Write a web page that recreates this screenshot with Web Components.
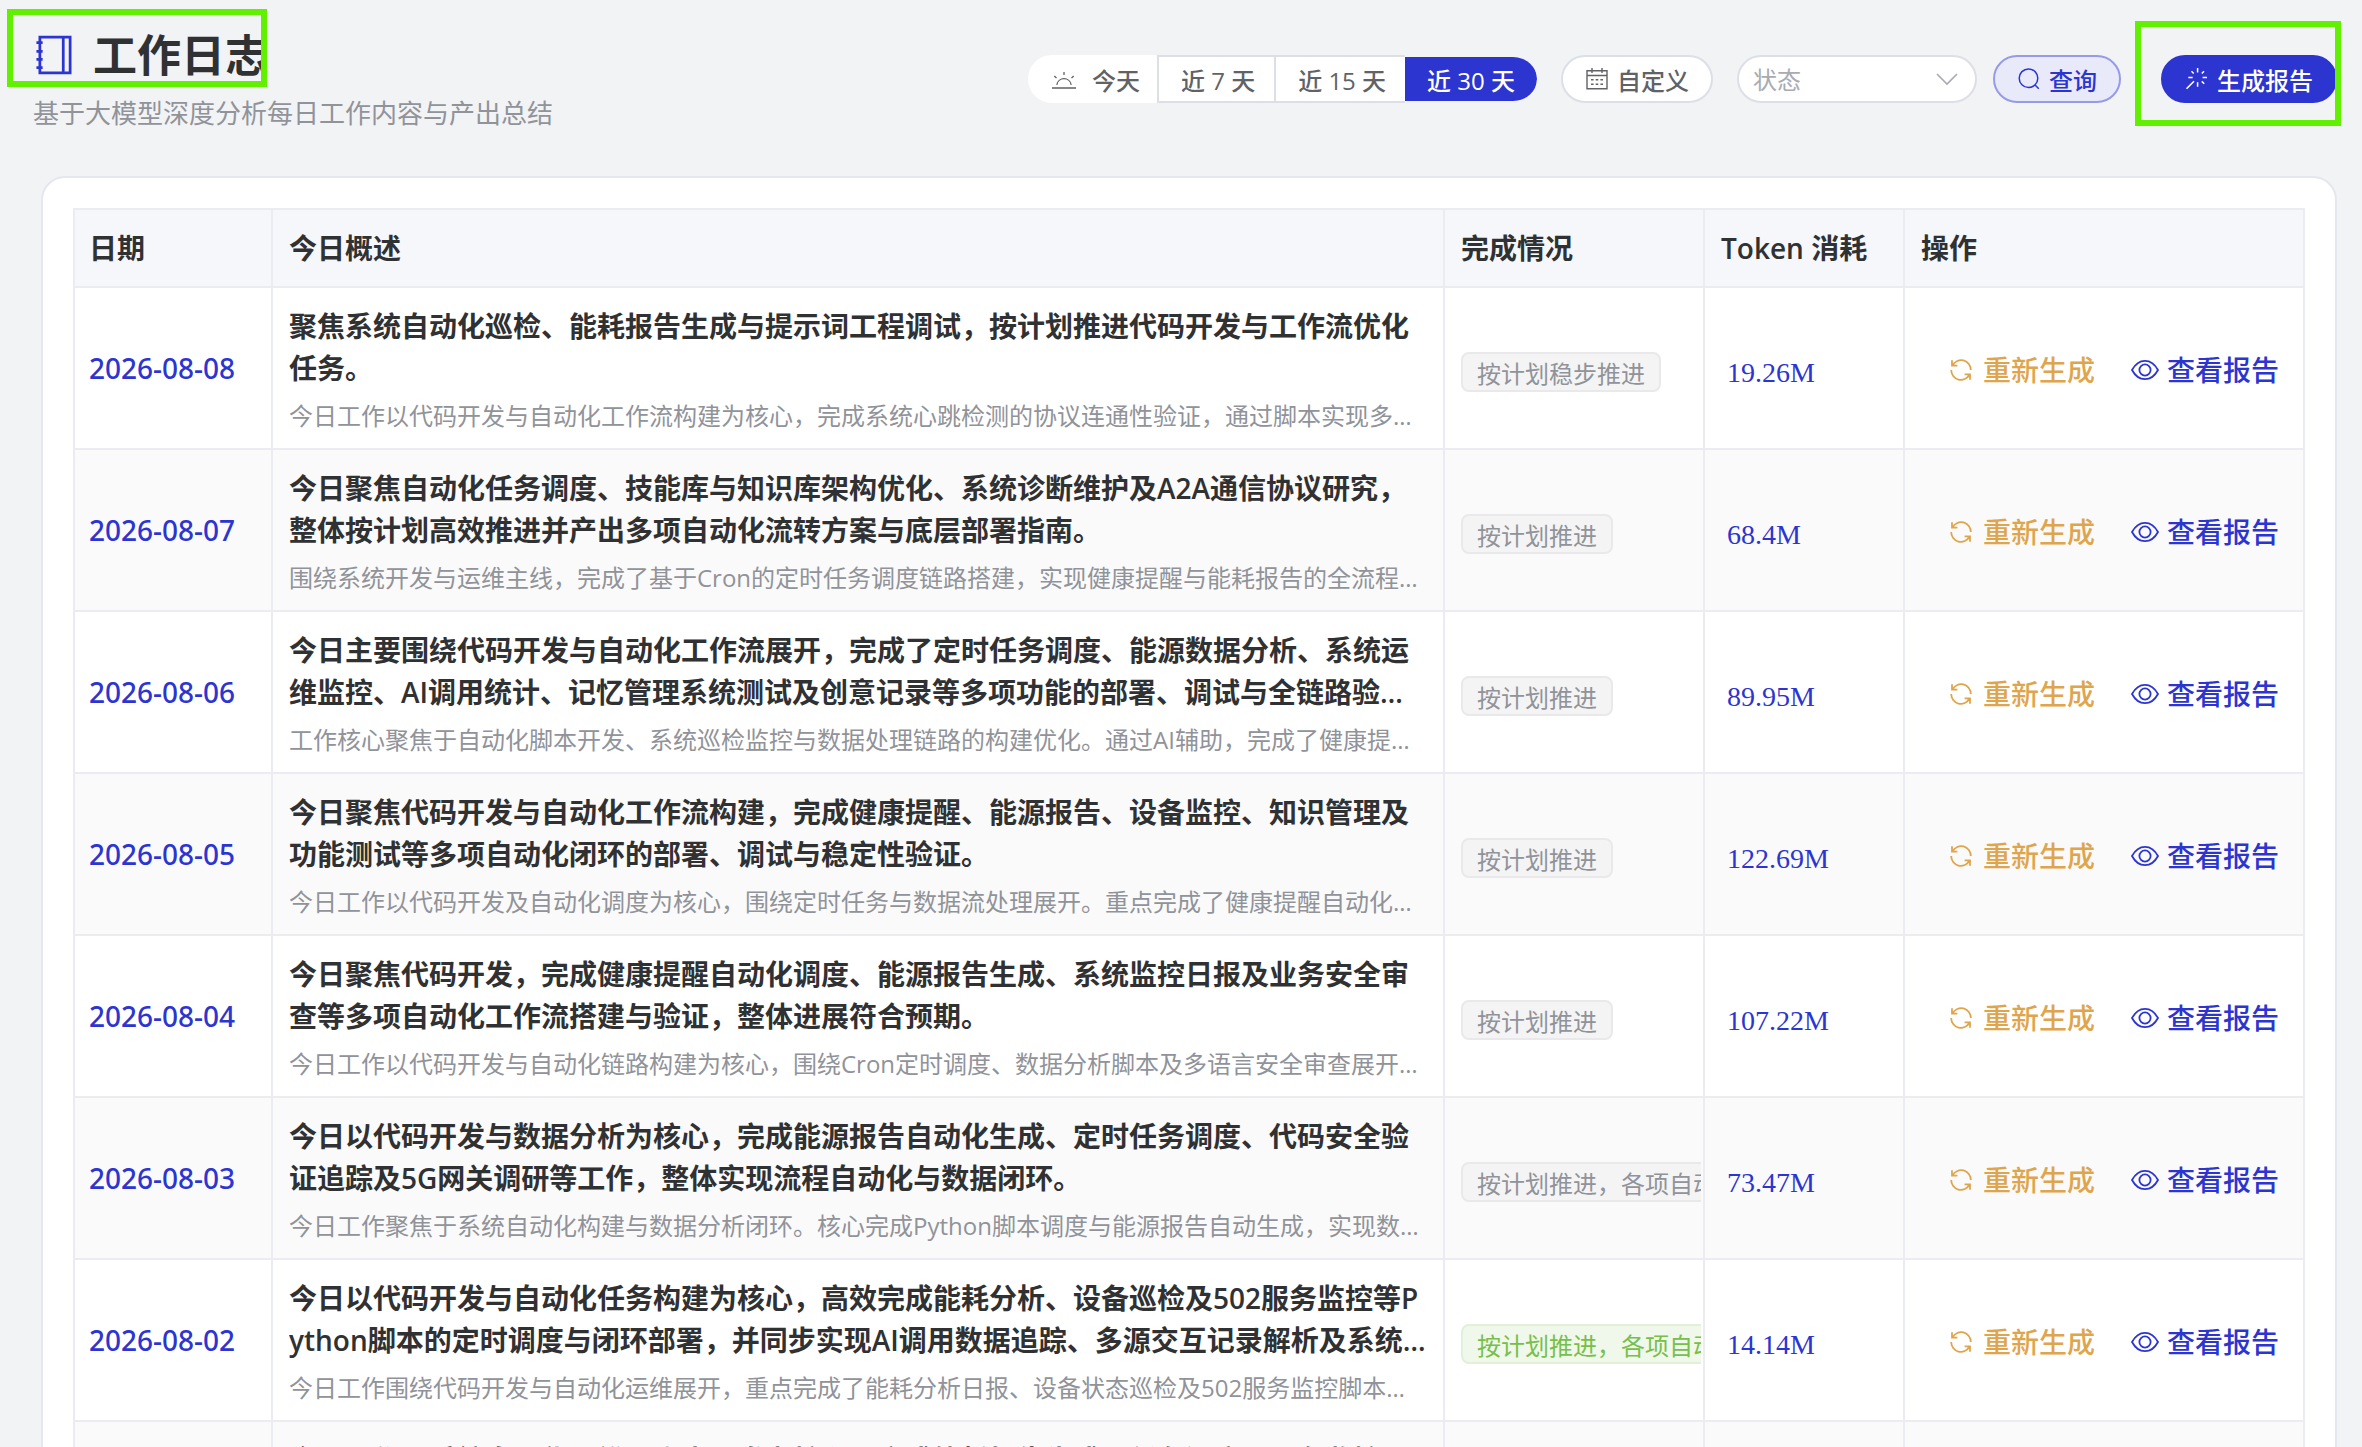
<!DOCTYPE html>
<html lang="zh-CN">
<head>
<meta charset="UTF-8">
<title>工作日志</title>
<style>
    body {
        margin: 0;
        background: #f2f3f5;
        color: #303133;
        font-family: "Open Sans", "Noto Sans CJK SC", sans-serif;
        --primary: #2c35d0;
        --line: #ebecf2;
        --mark: #61f000;
    }
</style>
</head>
<body>
<work-log-page></work-log-page>

<script>
const ICONS = {
    notebook: ['0 0 1024 1024', 64, '<path d="M160 96h704v832H160zM704 96v832M80 226h144M80 428h144M80 614h144M80 808h144"/>'],
    sunrise: ['0 0 24 24', 1.3, '<path d="M0 21h24M4.8 17.8a7.3 7.3 0 0 1 14.4 0M12 5v3M2.3 9l2.2 2M21.7 9l-2.2 2"/>'],
    calendar: ['0 0 24 24', 1.4, '<path d="M2 3.7h20v18.1H2zM2 8.5h20M7 1v5M17 1v5M6 12.8h2.6M10.7 12.8h2.6M15.4 12.8H18M6 17.3h2.6M10.7 17.3h2.6M15.4 17.3H18"/>'],
    search: ['0 0 24 24', 1.5, '<circle cx="11.5" cy="11.2" r="9.3"/><path d="M18 18l3.8 3.8"/>'],
    wand: ['0 0 24 24', 1.5, '<path d="M12.6 1v4.5M12.6 15.2v4.5M3.3 10.4h4.4M17.6 10.4H22M6.5 4.3l2.2 2.2M19 4.3l-2.2 2.2M16.8 14.4l2.4 2.4M1.5 21.8L9 14.2"/>'],
    arrow: ['0 0 24 24', 1.6, '<path d="M2 7l10 10L22 7"/>'],
    refresh: ['0 0 28 28', 1.8, '<path d="M5 4.2v5.4h5.4M5.6 9.2A9.7 9.7 0 0 1 23.8 14M23 23.8v-5.4h-5.4M22.4 18.8A9.7 9.7 0 0 1 4.2 14"/>'],
    eye: ['0 0 28 28', 1.8, '<path d="M1 14C4.5 7.5 9 4.8 14 4.8S23.5 7.5 27 14c-3.5 6.5-8 9.2-13 9.2S4.5 20.5 1 14z"/><circle cx="14" cy="14" r="5.6"/>']
};

const LOGS = [
    ['2026-08-08', '聚焦系统自动化巡检、能耗报告生成与提示词工程调试，按计划推进代码开发与工作流优化任务。', '今日工作以代码开发与自动化工作流构建为核心，完成系统心跳检测的协议连通性验证，通过脚本实现多…', '按计划稳步推进', 'info', '19.26M'],
    ['2026-08-07', '今日聚焦自动化任务调度、技能库与知识库架构优化、系统诊断维护及A2A通信协议研究，整体按计划高效推进并产出多项自动化流转方案与底层部署指南。', '围绕系统开发与运维主线，完成了基于Cron的定时任务调度链路搭建，实现健康提醒与能耗报告的全流程…', '按计划推进', 'info', '68.4M'],
    ['2026-08-06', '今日主要围绕代码开发与自动化工作流展开，完成了定时任务调度、能源数据分析、系统运维监控、AI调用统计、记忆管理系统测试及创意记录等多项功能的部署、调试与全链路验…', '工作核心聚焦于自动化脚本开发、系统巡检监控与数据处理链路的构建优化。通过AI辅助，完成了健康提…', '按计划推进', 'info', '89.95M'],
    ['2026-08-05', '今日聚焦代码开发与自动化工作流构建，完成健康提醒、能源报告、设备监控、知识管理及功能测试等多项自动化闭环的部署、调试与稳定性验证。', '今日工作以代码开发及自动化调度为核心，围绕定时任务与数据流处理展开。重点完成了健康提醒自动化…', '按计划推进', 'info', '122.69M'],
    ['2026-08-04', '今日聚焦代码开发，完成健康提醒自动化调度、能源报告生成、系统监控日报及业务安全审查等多项自动化工作流搭建与验证，整体进展符合预期。', '今日工作以代码开发与自动化链路构建为核心，围绕Cron定时调度、数据分析脚本及多语言安全审查展开…', '按计划推进', 'info', '107.22M'],
    ['2026-08-03', '今日以代码开发与数据分析为核心，完成能源报告自动化生成、定时任务调度、代码安全验证追踪及5G网关调研等工作，整体实现流程自动化与数据闭环。', '今日工作聚焦于系统自动化构建与数据分析闭环。核心完成Python脚本调度与能源报告自动生成，实现数…', '按计划推进，各项自动', 'info', '73.47M'],
    ['2026-08-02', '今日以代码开发与自动化任务构建为核心，高效完成能耗分析、设备巡检及502服务监控等Python脚本的定时调度与闭环部署，并同步实现AI调用数据追踪、多源交互记录解析及系统…', '今日工作围绕代码开发与自动化运维展开，重点完成了能耗分析日报、设备状态巡检及502服务监控脚本…', '按计划推进，各项自动', 'success', '14.14M'],
    ['2026-08-01', '今日工作以系统自动化运维与脚本开发为核心，完成能耗报告生成、任务调度与服务监控。', '今日工作以自动化任务为核心，完成日常巡检与报告生成。', '按计划推进', 'info', '56.31M']
];

class LineIcon extends HTMLElement {

    constructor(){
        super();
        this.shadowObj = this.attachShadow({mode:'open'});
    }

    connectedCallback(){
        const [viewBox, stroke, shape] = ICONS[this.getAttribute('name')];
        this.shadowObj.innerHTML = `
            <style>
                :host { display: inline-block; flex: none; width: 24px; height: 24px; }
                svg { display: block; width: 100%; height: 100%; }
            </style>
            <svg viewBox="${viewBox}" fill="none" stroke="currentColor" stroke-width="${stroke}" aria-hidden="true">${shape}</svg>
        `;
    }
}

class PillButton extends HTMLElement {

    constructor(){
        super();
        this.shadowObj = this.attachShadow({mode:'open'});
    }

    connectedCallback(){
        this.shadowObj.innerHTML = `
            <style>
                :host { display: block; }
                button {
                    display: flex;
                    align-items: center;
                    gap: 8px;
                    box-sizing: border-box;
                    height: 48px;
                    padding: 0 22px;
                    border: 2px solid #dcdfe6;
                    border-radius: 24px;
                    background: #fff;
                    color: #606266;
                    font: inherit;
                    font-size: 24px;
                    font-weight: 500;
                    white-space: nowrap;
                    cursor: pointer;
                }
                :host([type=plain]) button { background: #e8e9f9; border-color: #969ae8; color: var(--primary); }
                :host([type=primary]) button { background: var(--primary); border-color: var(--primary); color: #fff; }
            </style>
            <button type="button"><line-icon name="${this.getAttribute('icon')}"></line-icon><slot></slot></button>
        `;
    }
}

class RangePicker extends HTMLElement {

    constructor(){
        super();
        this.shadowObj = this.attachShadow({mode:'open'});
    }

    connectedCallback(){
        this.shadowObj.innerHTML = `
            <style>
                :host { display: block; }
                .group { display: flex; font-size: 24px; font-weight: 500; color: #606266; }
                label {
                    display: flex;
                    align-items: center;
                    box-sizing: border-box;
                    position: relative;
                    height: 48px;
                    padding: 0 19px 0 22px;
                    border: 2px solid #dcdfe6;
                    border-right: 0;
                    background: #fff;
                    white-space: nowrap;
                    cursor: pointer;
                }
                label:first-child { gap: 16px; padding-right: 17px; border-color: #fff; border-radius: 24px 0 0 24px; }
                label:last-child {
                    padding: 0 22px;
                    border-color: transparent;
                    border-left: 0;
                    border-radius: 0 24px 24px 0;
                    background-clip: padding-box;
                }
                label:has(:checked) { background-color: var(--primary); color: #fff; }
                input { position: absolute; opacity: 0; margin: 0; }
            </style>
            <div class="group" role="radiogroup" aria-label="日期范围">
                <label><input type="radio" name="range" value="1"><line-icon name="sunrise"></line-icon>今天</label>
                <label><input type="radio" name="range" value="7">近 7 天</label>
                <label><input type="radio" name="range" value="15">近 15 天</label>
                <label><input type="radio" name="range" value="30" checked>近 30 天</label>
            </div>
        `;
    }
}

class StatusSelect extends HTMLElement {

    constructor(){
        super();
        this.shadowObj = this.attachShadow({mode:'open'});
    }

    connectedCallback(){
        this.shadowObj.innerHTML = `
            <style>
                :host { display: grid; align-items: center; width: 240px; }
                select, line-icon { grid-area: 1 / 1; }
                select {
                    appearance: none;
                    box-sizing: border-box;
                    width: 100%;
                    height: 48px;
                    padding: 0 52px 0 14px;
                    border: 2px solid #dcdfe6;
                    border-radius: 24px;
                    background: #fff;
                    color: #a8abb2;
                    font: inherit;
                    font-size: 24px;
                }
                line-icon { justify-self: end; margin-right: 18px; color: #a8abb2; pointer-events: none; }
            </style>
            <select aria-label="状态"><option>状态</option></select>
            <line-icon name="arrow"></line-icon>
        `;
    }
}

class StatusTag extends HTMLElement {

    constructor(){
        super();
        this.shadowObj = this.attachShadow({mode:'open'});
    }

    connectedCallback(){
        this.shadowObj.innerHTML = `
            <style>
                :host {
                    display: inline-flex;
                    align-items: center;
                    box-sizing: border-box;
                    height: 40px;
                    padding: 0 14px;
                    border: 2px solid #e9e9eb;
                    border-radius: 8px;
                    background: #f4f4f5;
                    color: #909399;
                    font-size: 24px;
                    white-space: nowrap;
                    vertical-align: top;
                }
                :host([type=success]) { background: #f0f7eb; border-color: #e1f0d6; color: #76c04a; }
            </style>
            <slot></slot>
        `;
    }
}

class LogTable extends HTMLElement {

    constructor(){
        super();
        this.shadowObj = this.attachShadow({mode:'open'});
    }

    connectedCallback(){
        this.shadowObj.innerHTML = this.getTemplate();
    }

    getRow([date, title, detail, status, type, token]){
        return `
            <tr>
                <td><span class="date">${date}</span></td>
                <td><p class="title">${title}</p><p class="detail">${detail}</p></td>
                <td class="status"><div class="clip"><status-tag type="${type}">${status}</status-tag></div></td>
                <td class="token"><a href="#token-${date}">${token}</a></td>
                <td><div class="actions">
                    <button type="button"><line-icon name="refresh"></line-icon>重新生成</button>
                    <a href="#report-${date}"><line-icon name="eye"></line-icon>查看报告</a>
                </div></td>
            </tr>
        `;
    }

    getTemplate(){
        return `
            <style>
                :host { display: block; }
                table {
                    width: 100%;
                    table-layout: fixed;
                    border-spacing: 0;
                    border: 2px solid var(--line);
                    border-width: 2px 0 0 2px;
                    font-size: 28px;
                }
                .c-date { width: 198px; }
                .c-status { width: 260px; }
                .c-token { width: 200px; }
                .c-actions { width: 400px; }
                th, td {
                    box-sizing: border-box;
                    border: 2px solid var(--line);
                    border-width: 0 2px 2px 0;
                    text-align: left;
                    overflow: hidden;
                }
                th { height: 78px; padding: 0 16px; background: #f5f7fb; font-weight: 600; line-height: 42px; }
                td { padding: 17px 16px 13px; }
                tbody tr { background: #fff; }
                tbody tr:nth-child(even) { background: #fafafa; }
                th:first-child, td:first-child { padding: 0 14px; }
                p { margin: 0; }
                .date { color: var(--primary); font-family: "Noto Sans", sans-serif; font-weight: 500; white-space: nowrap; }
                .title { height: 84px; line-height: 42px; font-weight: 600; word-break: break-all; overflow: hidden; }
                .detail {
                    margin-top: 8px;
                    line-height: 38px;
                    font-size: 24px;
                    color: #909399;
                    white-space: nowrap;
                    overflow: hidden;
                    text-overflow: ellipsis;
                }
                .status { padding: 8px 2px 0 16px; }
                .clip { overflow: hidden; }
                .token { padding: 10px 0 0 22px; font-family: "Liberation Serif", serif; }
                a { color: var(--primary); text-decoration: none; }
                .actions { display: flex; gap: 36px; padding-left: 26px; }
                .actions button, .actions a {
                    display: flex;
                    align-items: center;
                    gap: 8px;
                    padding: 0;
                    border: 0;
                    background: none;
                    font: inherit;
                    font-weight: 500;
                    line-height: 42px;
                    white-space: nowrap;
                }
                .actions button { color: #dfa54c; }
                .actions line-icon { width: 28px; height: 28px; }
            </style>
            <table>
                <colgroup><col class="c-date"><col><col class="c-status"><col class="c-token"><col class="c-actions"></colgroup>
                <thead>
                    <tr><th>日期</th><th>今日概述</th><th>完成情况</th><th>Token 消耗</th><th>操作</th></tr>
                </thead>
                <tbody>${LOGS.map(log => this.getRow(log)).join('')}</tbody>
            </table>
        `;
    }
}

class WorkLogPage extends HTMLElement {

    constructor(){
        super();
        this.shadowObj = this.attachShadow({mode:'open'});
    }

    connectedCallback(){
        this.shadowObj.innerHTML = `
            <style>
                :host { display: block; height: 100vh; overflow: hidden; }
                header {
                    display: flex;
                    justify-content: space-between;
                    align-items: center;
                    padding: 25px 25px 43px 33px;
                }
                .heading, .generate { position: relative; }
                h1 {
                    display: flex;
                    align-items: center;
                    gap: 16px;
                    margin: 0;
                    font-size: 44px;
                    font-weight: 700;
                    line-height: 60px;
                }
                h1 line-icon { width: 44px; height: 44px; color: var(--primary); }
                .heading p { margin: 8px 0 0; font-size: 26px; line-height: 40px; color: #909399; }
                .toolbar { display: flex; gap: 24px; }
                .toolbar status-select { margin-right: -8px; }
                .generate { margin-left: 16px; }
                /* highlight frames over the title and the main action */
                .mark { position: absolute; border: 6px solid var(--mark); pointer-events: none; }
                .heading .mark { left: -26px; top: -16px; width: 248px; height: 66px; }
                .generate .mark { inset: -34px -4px -23px -26px; }
                main {
                    margin: 0 25px 0 41px;
                    padding: 30px;
                    border: 2px solid #e4e7ed;
                    border-radius: 24px;
                    background: #fff;
                }
            </style>
            <header>
                <div class="heading">
                    <h1><line-icon name="notebook"></line-icon>工作日志</h1>
                    <p>基于大模型深度分析每日工作内容与产出总结</p>
                    <div class="mark"></div>
                </div>
                <div class="toolbar">
                    <range-picker></range-picker>
                    <pill-button icon="calendar">自定义</pill-button>
                    <status-select></status-select>
                    <pill-button type="plain" icon="search">查询</pill-button>
                    <div class="generate">
                        <pill-button type="primary" icon="wand">生成报告</pill-button>
                        <div class="mark"></div>
                    </div>
                </div>
            </header>
            <main><log-table></log-table></main>
        `;
    }
}

customElements.define('line-icon', LineIcon);
customElements.define('pill-button', PillButton);
customElements.define('range-picker', RangePicker);
customElements.define('status-select', StatusSelect);
customElements.define('status-tag', StatusTag);
customElements.define('log-table', LogTable);
customElements.define('work-log-page', WorkLogPage);
</script>
</body>
</html>
